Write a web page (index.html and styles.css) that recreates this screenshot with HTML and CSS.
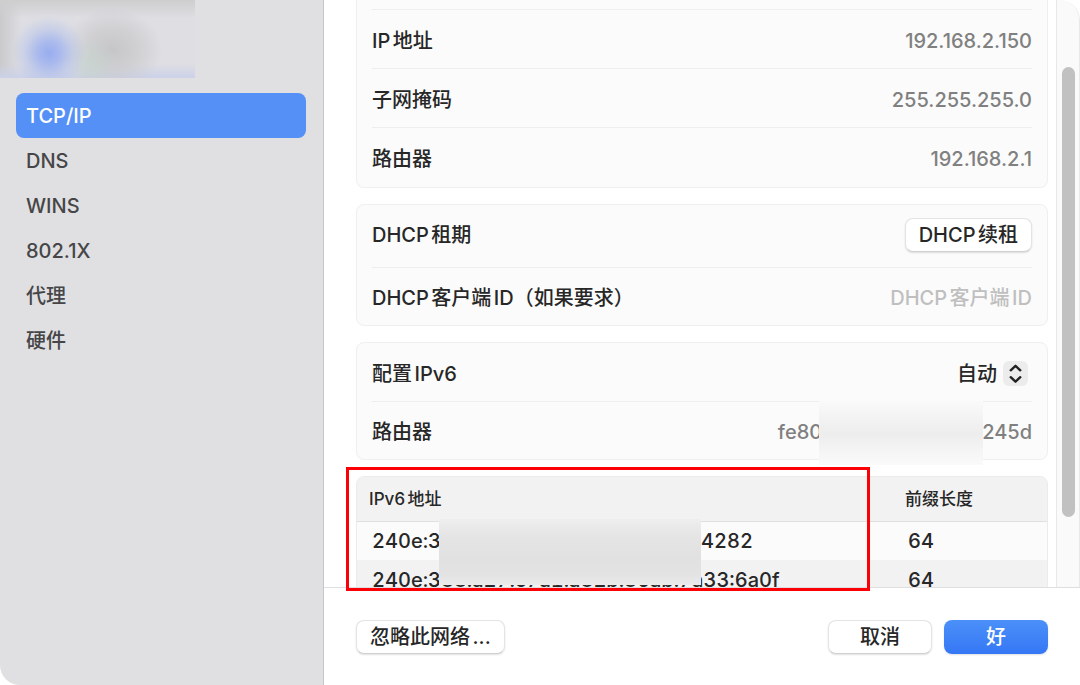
FILE: index.html
```html
<!DOCTYPE html>
<html lang="zh-CN">
<head>
<meta charset="utf-8">
<meta name="viewport" content="width=device-width, initial-scale=1">
<title>TCP/IP</title>
<link rel="stylesheet" href="styles.css">
</head>
<body>
<div class="window">
  <aside class="sidebar">
    <div class="network-header"></div>
    <nav class="nav">
      <a class="nav-item nav-item-active" href="#tcpip" aria-current="page">TCP/IP</a>
      <a class="nav-item" href="#dns">DNS</a>
      <a class="nav-item" href="#wins">WINS</a>
      <a class="nav-item" href="#8021x">802.1X</a>
      <a class="nav-item" href="#proxy">代理</a>
      <a class="nav-item" href="#hardware">硬件</a>
    </nav>
  </aside>

  <main class="main">
    <div class="viewport">
      <div class="content">
        <section class="group group-cut">
          <div class="row"><span>IP地址</span><span class="value">192.168.2.150</span></div>
          <div class="row"><span>子网掩码</span><span class="value">255.255.255.0</span></div>
          <div class="row"><span>路由器</span><span class="value">192.168.2.1</span></div>
        </section>

        <section class="group">
          <div class="row row-button"><span>DHCP租期</span><button class="button" type="button">DHCP续租</button></div>
          <div class="row row-short">
            <label class="label" for="client-id">DHCP客户端ID（如果要求）</label>
            <input class="input" id="client-id" type="text" placeholder="DHCP客户端ID">
          </div>
        </section>

        <section class="group">
          <div class="row row-short">
            <label for="ipv6-mode">配置IPv6</label>
            <span class="picker">
              <select class="select" id="ipv6-mode"><option>自动</option></select>
              <svg class="picker-icon" viewBox="0 0 25 25" aria-hidden="true"><path d="M7.700 9.300 12.500 4.800 17.300 9.300M7.700 16.200l4.800 4.500 4.800-4.500"/></svg>
            </span>
          </div>
          <div class="row row-short row-masked">
            <span>路由器</span>
            <span class="value value-split"><span>fe80</span><span>245d</span></span>
            <span class="mask mask-router"></span>
          </div>
        </section>

        <div class="table-box">
          <table class="table">
            <thead>
              <tr><th class="col-address">IPv6地址</th><th>前缀长度</th></tr>
            </thead>
            <tbody>
              <tr>
                <td class="cell-masked"><span class="address-split"><span class="address-start">240e:3</span><span>4282</span></span><span class="mask mask-address"></span></td>
                <td>64</td>
              </tr>
              <tr><td>240e:388:a27:c7a1:a82b:86ab:7a33:6a0f</td><td>64</td></tr>
            </tbody>
          </table>
        </div>
      </div>
      <div class="scroll-track"><div class="scroll-thumb"></div></div>
    </div>

    <footer class="footer">
      <button class="button" type="button">忽略此网络...</button>
      <div class="footer-actions">
        <button class="button button-wide" type="button">取消</button>
        <button class="button button-wide button-primary" type="button">好</button>
      </div>
    </footer>
    <div class="highlight"></div>
  </main>
</div>
</body>
</html>
```
FILE: styles.css
```css
* {
  box-sizing: border-box;
}

body {
  margin: 0;
  background: #fff;
  color: #272727;
  font: 450 20px/30px Inter, "Noto Sans CJK SC", sans-serif;
  text-autospace: normal;
}

button,
input,
select {
  font: inherit;
  color: inherit;
}

.window {
  display: grid;
  grid-template-columns: 324px minmax(0, 1fr);
  height: 100vh;
  overflow: hidden;
  border-radius: 0 20px 0 20px;
}

/* Sidebar */
.sidebar {
  background: #e0e0e2;
  border-right: 1px solid #c6c6c8;
}

.network-header {
  width: 195px;
  height: 78px;
  background:
    radial-gradient(circle at 49px 53px, #98adf0 0, #9fb2efcc 12px, #b4c1eb80 24px, #d0d5e61a 36px, transparent 44px),
    radial-gradient(circle at 90px 64px, #c3d5cb99 0, transparent 26px),
    radial-gradient(ellipse 50px 42px at 112px 50px, #c6c6c8 0, #cacaccb3 50%, transparent 100%),
    linear-gradient(to top, #cbd1e8 0, transparent 14px),
    linear-gradient(to bottom, #cececf 0, transparent 18px),
    linear-gradient(to right, #cacacc 0, transparent 22px),
    #dedee3;
}

.nav {
  display: flex;
  flex-direction: column;
  padding: 15px 17px 0 16px;
}

.nav-item {
  padding: 8px 10px 7px;
  border-radius: 8px;
  color: #464648;
  text-decoration: none;
}

.nav-item-active {
  background: #5590f6;
  color: #fff;
}

/* Main column */
.main {
  position: relative;
  display: flex;
  flex-direction: column;
  min-width: 0;
  min-height: 0;
}

.viewport {
  flex: 1;
  display: flex;
  min-height: 0;
  overflow: hidden;
}

.content {
  flex: 1;
  display: flex;
  flex-direction: column;
  gap: 16px;
  min-width: 0;
  padding: 0 8px 0 32px;
}

.group {
  flex: none;
  padding: 0 15px;
  border: 1px solid #efefef;
  border-radius: 8px;
  background: #fbfbfb;
}

.group-cut {
  padding-top: 9px;
  padding-bottom: 1px;
  border-top: 0;
  border-radius: 0 0 8px 8px;
}

.group-cut .row {
  border-top: 1px solid #eee;
}

.row {
  display: flex;
  align-items: center;
  justify-content: space-between;
  height: 59px;
  padding-top: 3px;
}

.row-button {
  height: 62px;
  padding: 0 0 2px;
}

.row-short {
  height: 58px;
}

.row + .row {
  border-top: 1px solid #eee;
}

.value {
  color: #808080;
}

.label {
  flex: none;
}

.input {
  flex: 1;
  min-width: 0;
  padding: 0;
  border: 0;
  outline: 0;
  background: none;
  text-align: right;
}

.input::placeholder {
  color: #bfbfbf;
  opacity: 1;
}

.picker {
  position: relative;
  margin-right: 4px;
}

.select {
  height: 30px;
  padding: 0 31px 0 0;
  border: 0;
  background: none;
  appearance: none;
}

.picker-icon {
  position: absolute;
  top: 2px;
  right: 0;
  width: 25px;
  height: 25px;
  border-radius: 6px;
  background: #ececec;
  fill: none;
  stroke: #222;
  stroke-width: 2.4;
  stroke-linecap: round;
  stroke-linejoin: round;
  pointer-events: none;
}

/* Redacted areas */
.row-masked,
.cell-masked {
  position: relative;
}

.value-split {
  display: flex;
  gap: 160px;
}

.mask {
  position: absolute;
  z-index: 1;
}

.mask-router {
  top: -1px;
  right: 49px;
  width: 164px;
  height: 64px;
  background: linear-gradient(#fafafa, #f1f1f1 35%, #ededed 52%, #f4f4f4 75%, #fafafa);
}

.mask-address {
  top: -3px;
  left: 82px;
  width: 262px;
  height: 66px;
  background: linear-gradient(#eee, #e5e5e5 25%, #e1e1e1 60%, #e3e3e3 85%, #ebebeb);
}

/* Address table */
.table-box {
  flex: none;
  overflow: hidden;
  border: 1px solid #ebebeb;
  border-radius: 8px;
  background: #fbfbfb;
}

.table {
  width: 100%;
  border-collapse: collapse;
  table-layout: fixed;
  font-variant-numeric: tabular-nums;
}

.table th {
  height: 44px;
  padding: 0 12px;
  border-bottom: 1px solid #e0e0e0;
  background: #f2f2f2;
  font-size: 17px;
  font-weight: inherit;
  text-align: left;
}

.table .col-address {
  width: 536px;
}

.table td {
  height: 39px;
  padding: 1px 15px 0;
  white-space: nowrap;
}

.table tbody tr:nth-child(even) {
  background: #f2f2f2;
}

.address-split {
  display: flex;
}

.address-start {
  width: 329px;
}

/* Scroll bar */
.scroll-track {
  width: 24px;
  padding: 67px 4px 0 5px;
  border: 1px solid #e8e8e8;
  border-width: 0 1px;
  border-radius: 0 20px 0 0;
  background: #fafafa;
}

.scroll-thumb {
  height: 450px;
  border-radius: 7px;
  background: #c1c1c1;
}

/* Footer */
.footer {
  display: flex;
  justify-content: space-between;
  align-items: flex-start;
  padding: 32px 32px 31px;
  border-top: 1px solid #dfdfdf;
}

.footer-actions {
  display: flex;
  gap: 12px;
}

.button {
  height: 34px;
  padding: 0 13px;
  border: 1px solid #e4e4e4;
  border-bottom-color: #cfcfcf;
  border-radius: 8px;
  background: #fff;
  box-shadow: 0 1px 2px #0000001f;
  line-height: 30px;
}

.button-wide {
  width: 104px;
}

.button-primary {
  border: 0;
  background: linear-gradient(#4b90f9, #3577f5);
  color: #fff;
}

.highlight {
  position: absolute;
  right: 210px;
  bottom: 94px;
  left: 22px;
  height: 124px;
  border: 3px solid #fb0007;
  pointer-events: none;
}
```
